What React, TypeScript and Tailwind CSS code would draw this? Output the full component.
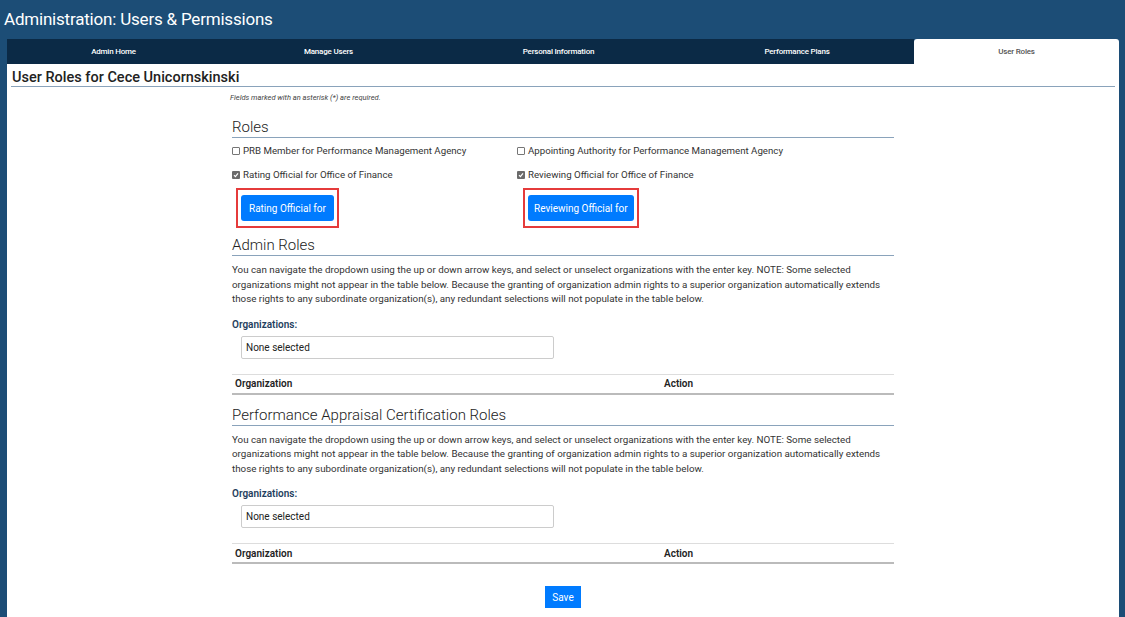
import React from 'react';

const tabs = [
  { label: 'Admin Home', w: 'w-[213px]' },
  { label: 'Manage Users', w: 'w-[217px]' },
  { label: 'Personal Information', w: 'w-[243px]' },
  { label: 'Performance Plans', w: 'w-[234px]' },
  { label: 'User Roles', w: 'w-[205px]', active: true },
];

const Box: React.FC<{ checked?: boolean }> = ({ checked }) =>
  checked ? (
    <span className="inline-flex w-[8px] h-[8px] rounded-[1px] bg-[#6b6b6b] items-center justify-center mr-[3px]">
      <svg width="6" height="6" viewBox="0 0 6 6"><path d="M1 3.2 L2.4 4.6 L5 1.4" stroke="white" strokeWidth="1.2" fill="none" /></svg>
    </span>
  ) : (
    <span className="inline-block w-[8px] h-[8px] rounded-[1px] border border-[#767676] bg-white mr-[3px]" />
  );

const Heading: React.FC<{ title: string }> = ({ title }) => (
  <h3 className="text-[15px] font-light text-[#222] leading-[18px] pb-[1px] border-b border-[#8aa3bb]">{title}</h3>
);

const Section: React.FC<{ title: string }> = ({ title }) => (
  <>
    <Heading title={title} />
    <p className="text-[9.8px] text-[#333] leading-[14.5px] mt-[7px]">
      You can navigate the dropdown using the up or down arrow keys, and select or unselect organizations with the enter key. NOTE: Some selected<br />
      organizations might not appear in the table below. Because the granting of organization admin rights to a superior organization automatically extends<br />
      those rights to any subordinate organization(s), any redundant selections will not populate in the table below.
    </p>
    <div className="text-[10px] font-semibold text-[#1f3f60] mt-[11px] leading-[14px]">Organizations:</div>
    <div className="ml-[9px] mt-[4px] w-[313px] h-[23px] border border-[#ccc] rounded-[2px] flex items-center px-[4px] text-[10px] text-[#222]">None selected</div>
    <div className="mt-[15px] border-t border-[#ddd] border-b-2 border-b-[#bbb] h-[21px] flex items-center text-[10px] font-semibold text-[#222]">
      <span className="w-[432px] pl-[3px]">Organization</span>
      <span>Action</span>
    </div>
  </>
);

export default function App() {
  return (
    <div className="min-h-screen bg-[#1c4d76] font-['Roboto',sans-serif]">
      <h1 className="pl-[4px] h-[39px] flex items-center text-[17px] tracking-[-0.2px] text-white leading-none">Administration: Users &amp; Permissions</h1>
      <div className="ml-[7px] mr-[6px]">
        <div className="flex h-[25px]">
          {tabs.map(t => (
            <div
              key={t.label}
              className={`${t.w} flex items-center justify-center text-[8px] font-medium tracking-tight ${t.active ? 'bg-white text-[#555] rounded-t-[3px]' : 'bg-[#0b2a46] text-white'}`}
            >
              {t.label}
            </div>
          ))}
        </div>
        <div className="bg-white min-h-[553px] pb-[10px]">
          <h2 className="mx-[4px] pl-[1px] pt-[5px] text-[14.5px] font-medium text-[#222] leading-[17px] border-b border-[#8aa3bb]">User Roles for Cece Unicornskinski</h2>
          <div className="ml-[223px] mt-[6px] text-[7.5px] italic text-[#444] leading-[10px]">Fields marked with an asterisk (*) are required.</div>
          <div className="ml-[225px] w-[662px] mt-[15px]">
            <Heading title="Roles" />
            <div className="grid grid-cols-[285px_1fr] text-[9.7px] text-[#333] mt-[7px]">
              <div className="flex items-center h-[12px]"><Box />PRB Member for Performance Management Agency</div>
              <div className="flex items-center h-[12px]"><Box />Appointing Authority for Performance Management Agency</div>
              <div className="flex items-center h-[12px] mt-[12px]"><Box checked />Rating Official for Office of Finance</div>
              <div className="flex items-center h-[12px] mt-[12px]"><Box checked />Reviewing Official for Office of Finance</div>
              <div className="mt-[7px] ml-[4px]">
                <div className="inline-block border-2 border-[#e53b3b] px-[3px] py-[5px]">
                  <button className="bg-[#007bff] text-white text-[10px] rounded-[3px] px-[8px] h-[26px]">Rating Official for</button>
                </div>
              </div>
              <div className="mt-[7px] ml-[6px]">
                <div className="inline-block border-2 border-[#e53b3b] px-[3px] py-[5px]">
                  <button className="bg-[#007bff] text-white text-[10px] rounded-[3px] px-[6px] h-[26px]">Reviewing Official for</button>
                </div>
              </div>
            </div>
            <div className="mt-[8px]"><Section title="Admin Roles" /></div>
            <div className="mt-[11px]"><Section title="Performance Appraisal Certification Roles" /></div>
            <div className="flex justify-center mt-[22px]">
              <button className="bg-[#007bff] text-white text-[10px] h-[22px] w-[36px]">Save</button>
            </div>
          </div>
        </div>
      </div>
    </div>
  );
}
